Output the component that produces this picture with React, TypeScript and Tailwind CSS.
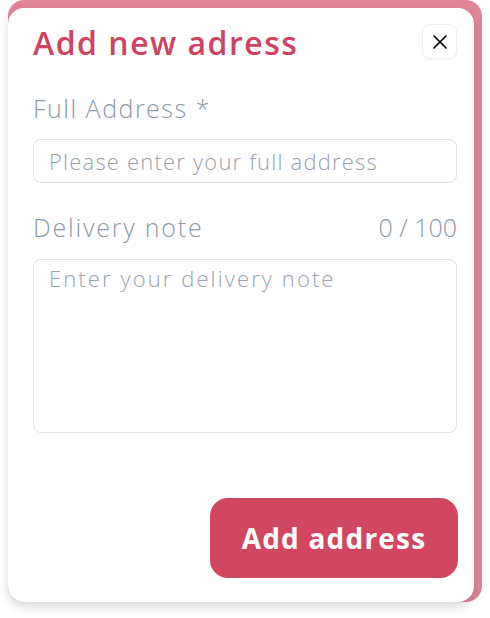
import { useState } from "react";
import { X } from "lucide-react";

const MAX_NOTE = 100;

export default function App() {
  const [address, setAddress] = useState("");
  const [note, setNote] = useState("");

  return (
    <div className="min-h-screen bg-white pl-2 font-['Open_Sans',sans-serif]">
      <div className="w-[474px] rounded-[16px] bg-[#e08597] pr-2 pt-2">
        <div className="flex h-[594px] flex-col rounded-[16px] bg-white pb-[24px] pl-[25px] pr-[17px] pt-[16px] shadow-[0_5px_10px_rgba(0,0,0,0.14)]">
          <div className="flex items-start justify-between">
            <h2 className="mt-[1px] text-[32px] font-semibold leading-[36px] tracking-[1.5px] text-[#cd4462]">
              Add new adress
            </h2>
            <button
              type="button"
              aria-label="Close"
              className="flex h-[35px] w-[35px] items-center justify-center rounded-[8px] border border-[#f0f0f0] shadow-[0_1px_2px_rgba(0,0,0,0.04)]"
            >
              <X size={24} strokeWidth={1.7} className="text-black" />
            </button>
          </div>

          <label className="mt-[32px] block text-[25px] font-light leading-[30px] tracking-[1.5px] text-[#8d99a6]">
            Full Address *
          </label>
          <input
            value={address}
            onChange={(e) => setAddress(e.target.value)}
            placeholder="Please enter your full address"
            className="mt-[16px] h-[44px] w-full rounded-[8px] border border-[#e1e3e7] px-[15px] text-[22px] font-light tracking-[1.2px] text-[#4b5563] outline-none placeholder:text-[#97a2ad]"
          />

          <div className="mt-[29px] flex items-center justify-between text-[25px] font-light leading-[30px] text-[#8d99a6]">
            <label className="tracking-[1.8px]">Delivery note</label>
            <span>
              {note.length} / {MAX_NOTE}
            </span>
          </div>
          <textarea
            value={note}
            maxLength={MAX_NOTE}
            onChange={(e) => setNote(e.target.value)}
            placeholder="Enter your delivery note"
            className="mt-[17px] h-[174px] w-full resize-none rounded-[8px] border border-[#e1e3e7] px-[15px] py-[4px] text-[22px] font-light leading-[28px] tracking-[2.1px] text-[#4b5563] outline-none placeholder:text-[#97a2ad]"
          />

          <button
            type="button"
            className="mr-[-1px] mt-auto h-[80px] w-[248px] self-end rounded-[18px] bg-[#d1475f] text-[28px] font-bold tracking-[1.2px] text-white"
          >
            Add address
          </button>
        </div>
      </div>
    </div>
  );
}
